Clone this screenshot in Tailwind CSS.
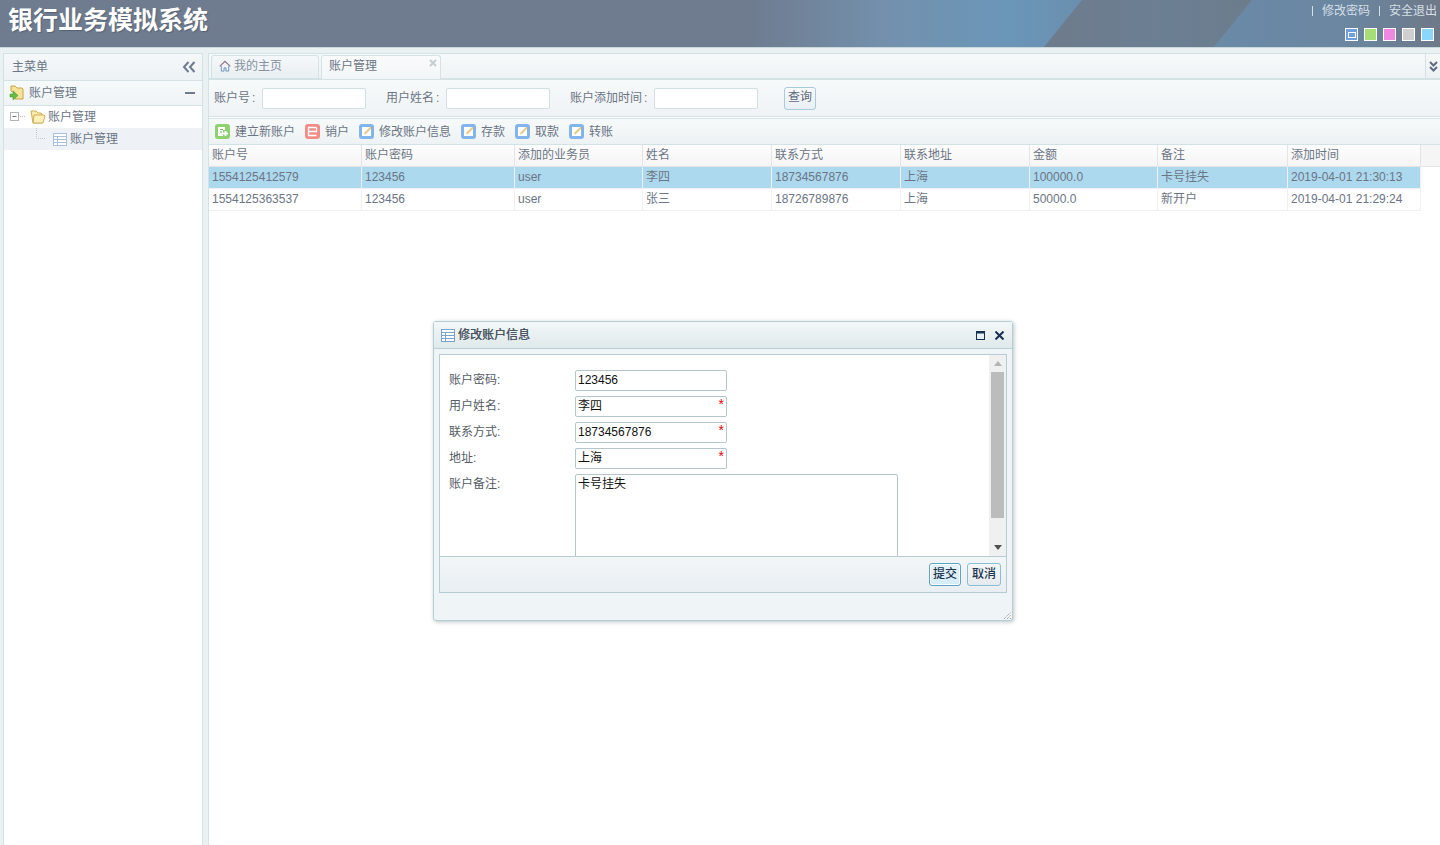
<!DOCTYPE html>
<html lang="zh">
<head>
<meta charset="utf-8">
<title>银行业务模拟系统</title>
<script src="https://cdn.jsdelivr.net/npm/@tailwindcss/browser@4"></script>
</head>
<body class="h-[845px] overflow-hidden bg-[#eaf1f2] font-['Liberation_Sans','Noto_Sans_CJK_SC',sans-serif] text-xs leading-[22px] text-[#6b7584]">
<div class="relative h-[845px] w-[1440px] overflow-hidden">

  <!-- header -->
  <header class="relative h-[48px] overflow-hidden border-b border-[#c9d8db] bg-[linear-gradient(90deg,#6f7c8f_0%,#6f7c8f_52%,#7391ae_62%,#6a96b8_70%,#6b8fae_75%,#6c8299_100%)]">
    <svg class="absolute inset-0" width="1440" height="47" viewBox="0 0 1440 47">
      <defs>
        <linearGradient id="d1" x1="0" x2="1" y1="0" y2="0"><stop offset="0" stop-color="#6e7b8c"/><stop offset=".6" stop-color="#6b7f93"/><stop offset="1" stop-color="#6c7c8c"/></linearGradient>
        <linearGradient id="d2" x1="0" x2="1" y1="0" y2="0"><stop offset="0" stop-color="#6a8aa8"/><stop offset=".6" stop-color="#6b86a0"/><stop offset="1" stop-color="#6e7888"/></linearGradient>
      </defs>
      <polygon points="1082,0 1252,0 1214,47 1044,47" fill="url(#d1)"/>
      <polygon points="1252,0 1440,0 1440,47 1214,47" fill="url(#d2)"/>
    </svg>
    <div class="relative flex h-full items-start justify-between">
      <div class="pl-2 pt-[7px] text-[25px] leading-[26px] font-bold text-white [text-shadow:1px_1px_1px_rgba(40,50,70,0.35)]">银行业务模拟系统</div>
      <div class="flex flex-col items-end pr-[3px]">
        <div class="flex h-[22px] items-center text-xs text-[#d5dfe6]">
          <span class="mr-[9px] h-[10px] w-px bg-[#d5dfe6]"></span><span>修改密码</span>
          <span class="mx-[9px] h-[10px] w-px bg-[#d5dfe6]"></span><span>安全退出</span>
        </div>
        <div class="mr-[3px] mt-[6px] flex gap-[6px]">
          <span class="flex h-[13px] w-[13px] items-center justify-center border border-white bg-[#6f9fe0]"><span class="h-[6px] w-[8px] border border-white"></span></span>
          <span class="h-[13px] w-[13px] border border-white bg-[#a7dd75]"></span>
          <span class="h-[13px] w-[13px] border border-white bg-[#ee88e0]"></span>
          <span class="h-[13px] w-[13px] border border-white bg-[#cfcfcf]"></span>
          <span class="h-[13px] w-[13px] border border-white bg-[#8cd6fb]"></span>
        </div>
      </div>
    </div>
  </header>

  <div class="flex h-[797px] pt-[5px]">
    <!-- sidebar -->
    <aside class="ml-[3px] h-[800px] w-[200px] shrink-0 border border-[#d3e2e4] bg-white">
      <div class="flex h-[27px] items-center justify-between border-b border-[#d3e2e4] bg-[linear-gradient(#f5f8f9,#edf2f5)] pl-[8px] pr-[6px]">
        <span>主菜单</span>
        <svg width="14" height="12" viewBox="0 0 14 12" fill="none" stroke="#6e7b8f" stroke-width="2"><path d="M6.500 1 2 6l4.500 5M12.500 1 8 6l4.500 5"/></svg>
      </div>
      <div class="flex h-[25px] items-center justify-between border-b border-[#d3e2e4] bg-[linear-gradient(#f7fafa,#eff3f6)] pl-[5px] pr-[7px]">
        <span class="flex items-center gap-[5px]">
          <svg width="15" height="16" viewBox="0 0 15 16"><path d="M2 1h4l2 2h5l1 1v10H6V8L2 6z" fill="#f5e39a" stroke="#c9a545"/><path d="M1 9h3V6l5 4.500L4 15v-3H1z" fill="#69bb45" stroke="#4d9a31" stroke-width=".6"/></svg>
          <span class="leading-[24px]">账户管理</span>
        </span>
        <span class="h-[2px] w-[10px] bg-[#6e7b8f]"></span>
      </div>
      <div class="flex h-[22px] items-center pl-[6px]">
        <svg width="21" height="10" viewBox="0 0 21 10" fill="none"><rect x=".5" y=".5" width="8" height="8" fill="#fff" stroke="#b4b4b4"/><path d="M2.500 4.500h4" stroke="#777"/><path d="M10 4.500h6" stroke="#c4c4c4" stroke-dasharray="1 1"/></svg>
        <svg class="ml-[-1px]" width="16" height="14" viewBox="0 0 16 14"><path d="M1 1h5l2 2h3l1 1v9H3z" fill="#fbeaa8" stroke="#cfae58"/><path d="M4 5h10l1 1-2 7H3z" fill="#fdf0bb" stroke="#cfae58"/></svg>
        <span class="ml-[2px]">账户管理</span>
      </div>
      <div class="flex h-[22px] items-center bg-[#eef2f7] pl-[32px]">
        <svg class="self-start" width="16" height="12" viewBox="0 0 16 12" fill="none"><path d="M.5 0v10.500h9" stroke="#c4c4c4" stroke-dasharray="1 1"/></svg>
        <svg class="ml-[1px]" width="14" height="13" viewBox="0 0 14 13" fill="#fff" stroke="#a9c0dd"><rect x=".5" y=".5" width="13" height="12"/><path d="M.5 3.500h13M.5 6.500h13M.5 9.500h13M4.500 3.500v9"/></svg>
        <span class="ml-[3px]">账户管理</span>
      </div>
    </aside>

    <!-- main -->
    <main class="ml-[5px] flex h-[800px] min-w-0 flex-1 flex-col border-l border-[#d3e2e4] bg-white">
      <!-- tabs -->
      <div class="relative flex h-[26px] border-b border-t border-[#d3e2e4] bg-[linear-gradient(#f7fafa,#eff3f5)] pl-[2px] pt-[1px]">
        <div class="flex h-[23px] w-[108px] items-start gap-[3px] rounded-t-[3px] border border-b-0 border-[#d3e2e4] bg-[linear-gradient(#f5f8f9,#e9eff2)] pl-[7px]">
          <svg class="mt-[4px]" width="12" height="12" viewBox="0 0 13 13" fill="none"><path d="M.8 7 6.500 1.500 12.200 7" stroke="#8d6f88" stroke-width="1.200"/><path d="M2.500 6.500V12h3V8.500h2V12h3V6.500" stroke="#6a8fc0"/></svg>
          <span class="leading-[21px] text-[#8590a0]">我的主页</span>
        </div>
        <div class="relative z-10 ml-[2px] flex h-[24px] w-[120px] items-start rounded-t-[3px] border border-b-0 border-[#d3e2e4] bg-[linear-gradient(#f9fbfb,#f3f6f8)] pl-[7px]">
          <span class="leading-[21px]">账户管理</span>
          <svg class="absolute right-[3px] top-[3px]" width="8" height="8" viewBox="0 0 8 8" stroke="#c3ced4" stroke-width="2"><path d="M1 1l6 6M7 1 1 7"/></svg>
        </div>
        <div class="absolute bottom-0 right-0 top-0 flex w-[15px] items-center justify-center border-l border-[#d3e2e4] bg-[linear-gradient(#f5f8f9,#edf1f4)]">
          <svg width="9" height="11" viewBox="0 0 9 11" fill="none" stroke="#5f6c80" stroke-width="2"><path d="M1 1l3.500 3.500L8 1M1 6l3.500 3.500L8 6"/></svg>
        </div>
      </div>
      <!-- search -->
      <div class="flex h-[38px] items-center border-b border-t border-[#d3e2e4] bg-[linear-gradient(#f7fafa,#eff3f6)] pl-[5px]">
        <span class="w-[48px]">账户号<span class="ml-[2px]">:</span></span>
        <span class="h-[21px] w-[104px] rounded-[2px] border border-[#cfdfe3] bg-white"></span>
        <span class="ml-[20px] w-[60px]">用户姓名<span class="ml-[2px]">:</span></span>
        <span class="h-[21px] w-[104px] rounded-[2px] border border-[#cfdfe3] bg-white"></span>
        <span class="ml-[20px] w-[84px]">账户添加时间<span class="ml-[2px]">:</span></span>
        <span class="h-[21px] w-[104px] rounded-[2px] border border-[#cfdfe3] bg-white"></span>
        <button class="ml-[26px] h-[23px] w-[32px] rounded-[3px] border border-[#a5cbdc] bg-[linear-gradient(#f8fafb,#e9eff3)] pb-[2px] text-xs leading-[18px] text-[#5e6a78]">查询</button>
      </div>
      <!-- toolbar -->
      <div class="mt-[1px] flex h-[27px] items-center gap-[10px] border-b border-t border-[#d3e2e4] bg-[linear-gradient(#f7fafa,#edf2f4)] pl-[6px]">
        <span class="flex items-center gap-[5px]">
          <svg width="15" height="15" viewBox="0 0 15 15"><rect width="15" height="15" rx="3" fill="#8fd071"/><path d="M3 3h7v3H8v6H3z" fill="#fff"/><path d="M8 9.500h5M10.500 7v5" stroke="#fff" stroke-width="1.800"/><path d="M5 5.500h3M5 8h2" stroke="#6fb650"/></svg>
          <span>建立新账户</span>
        </span>
        <span class="flex items-center gap-[5px]">
          <svg width="15" height="15" viewBox="0 0 15 15" fill="none"><rect width="15" height="15" rx="3" fill="#f28c86"/><path d="M11.500 3.500h-8v8h8M3.500 7.500h8v-4" stroke="#fff" stroke-width="1.300"/></svg>
          <span>销户</span>
        </span>
        <span class="flex items-center gap-[5px]">
          <svg width="15" height="15" viewBox="0 0 15 15"><rect width="15" height="15" rx="3" fill="#82b4ed"/><rect x="3" y="3" width="9" height="9" fill="#fff"/><path d="M5.500 10l.6-1.800L11.500 3l1 1-5.400 5.400z" fill="#f3cf82" stroke="#d6a24a" stroke-width=".4"/></svg>
          <span>修改账户信息</span>
        </span>
        <span class="flex items-center gap-[5px]">
          <svg width="15" height="15" viewBox="0 0 15 15"><rect width="15" height="15" rx="3" fill="#82b4ed"/><rect x="3" y="3" width="9" height="9" fill="#fff"/><path d="M5.500 10l.6-1.800L11.500 3l1 1-5.400 5.400z" fill="#f3cf82" stroke="#d6a24a" stroke-width=".4"/></svg>
          <span>存款</span>
        </span>
        <span class="flex items-center gap-[5px]">
          <svg width="15" height="15" viewBox="0 0 15 15"><rect width="15" height="15" rx="3" fill="#82b4ed"/><rect x="3" y="3" width="9" height="9" fill="#fff"/><path d="M5.500 10l.6-1.800L11.500 3l1 1-5.400 5.400z" fill="#f3cf82" stroke="#d6a24a" stroke-width=".4"/></svg>
          <span>取款</span>
        </span>
        <span class="flex items-center gap-[5px]">
          <svg width="15" height="15" viewBox="0 0 15 15"><rect width="15" height="15" rx="3" fill="#82b4ed"/><rect x="3" y="3" width="9" height="9" fill="#fff"/><path d="M5.500 10l.6-1.800L11.500 3l1 1-5.400 5.400z" fill="#f3cf82" stroke="#d6a24a" stroke-width=".4"/></svg>
          <span>转账</span>
        </span>
      </div>
      <!-- grid -->
      <div class="grid grid-cols-[153px_153px_128px_129px_129px_129px_128px_130px_133px_1fr] grid-rows-[22px_22px_22px]">
        <div class="border-b border-r border-[#e4e4e4] bg-[linear-gradient(#fdfdfd,#f5f5f5)] pl-[3px] leading-[21px]">账户号</div>
        <div class="border-b border-r border-[#e4e4e4] bg-[linear-gradient(#fdfdfd,#f5f5f5)] pl-[3px] leading-[21px]">账户密码</div>
        <div class="border-b border-r border-[#e4e4e4] bg-[linear-gradient(#fdfdfd,#f5f5f5)] pl-[3px] leading-[21px]">添加的业务员</div>
        <div class="border-b border-r border-[#e4e4e4] bg-[linear-gradient(#fdfdfd,#f5f5f5)] pl-[3px] leading-[21px]">姓名</div>
        <div class="border-b border-r border-[#e4e4e4] bg-[linear-gradient(#fdfdfd,#f5f5f5)] pl-[3px] leading-[21px]">联系方式</div>
        <div class="border-b border-r border-[#e4e4e4] bg-[linear-gradient(#fdfdfd,#f5f5f5)] pl-[3px] leading-[21px]">联系地址</div>
        <div class="border-b border-r border-[#e4e4e4] bg-[linear-gradient(#fdfdfd,#f5f5f5)] pl-[3px] leading-[21px]">金额</div>
        <div class="border-b border-r border-[#e4e4e4] bg-[linear-gradient(#fdfdfd,#f5f5f5)] pl-[3px] leading-[21px]">备注</div>
        <div class="border-b border-r border-[#e4e4e4] bg-[linear-gradient(#fdfdfd,#f5f5f5)] pl-[3px] leading-[21px]">添加时间</div>
        <div class="border-b border-[#e4e4e4] bg-[#f5f5f5]"></div>

        <div class="border-b border-r border-[#f0f0f0] bg-[#add9ef] pl-[3px] leading-[21px]">1554125412579</div>
        <div class="border-b border-r border-[#f0f0f0] bg-[#add9ef] pl-[3px] leading-[21px]">123456</div>
        <div class="border-b border-r border-[#f0f0f0] bg-[#add9ef] pl-[3px] leading-[21px]">user</div>
        <div class="border-b border-r border-[#f0f0f0] bg-[#add9ef] pl-[3px] leading-[21px]">李四</div>
        <div class="border-b border-r border-[#f0f0f0] bg-[#add9ef] pl-[3px] leading-[21px]">18734567876</div>
        <div class="border-b border-r border-[#f0f0f0] bg-[#add9ef] pl-[3px] leading-[21px]">上海</div>
        <div class="border-b border-r border-[#f0f0f0] bg-[#add9ef] pl-[3px] leading-[21px]">100000.0</div>
        <div class="border-b border-r border-[#f0f0f0] bg-[#add9ef] pl-[3px] leading-[21px]">卡号挂失</div>
        <div class="border-b border-r border-[#f0f0f0] bg-[#add9ef] pl-[3px] leading-[21px]">2019-04-01 21:30:13</div>
        <div></div>

        <div class="border-b border-r border-[#f0f0f0] pl-[3px] leading-[21px]">1554125363537</div>
        <div class="border-b border-r border-[#f0f0f0] pl-[3px] leading-[21px]">123456</div>
        <div class="border-b border-r border-[#f0f0f0] pl-[3px] leading-[21px]">user</div>
        <div class="border-b border-r border-[#f0f0f0] pl-[3px] leading-[21px]">张三</div>
        <div class="border-b border-r border-[#f0f0f0] pl-[3px] leading-[21px]">18726789876</div>
        <div class="border-b border-r border-[#f0f0f0] pl-[3px] leading-[21px]">上海</div>
        <div class="border-b border-r border-[#f0f0f0] pl-[3px] leading-[21px]">50000.0</div>
        <div class="border-b border-r border-[#f0f0f0] pl-[3px] leading-[21px]">新开户</div>
        <div class="border-b border-r border-[#f0f0f0] pl-[3px] leading-[21px]">2019-04-01 21:29:24</div>
        <div></div>
      </div>
    </main>
  </div>

  <!-- dialog -->
  <div class="absolute left-[433px] top-[321px] flex h-[300px] w-[580px] flex-col rounded-[3px] border border-[#b5ced5] bg-[#eff4f6] shadow-[1px_1px_4px_rgba(100,120,130,0.45)]">
    <div class="flex h-[27px] shrink-0 items-center justify-between border-b border-[#b9ced5] bg-[linear-gradient(#f3f7f8,#dfe9eb)] pl-[7px] pr-[8px]">
      <span class="flex items-center gap-[3px] text-[#4c5563]">
        <svg width="14" height="13" viewBox="0 0 14 13" fill="#fff" stroke="#7ba2cd"><rect x=".5" y=".5" width="13" height="12"/><path d="M.5 3.500h13M.5 6.500h13M.5 9.500h13M4.500 3.500v9"/></svg>
        <span class="[text-shadow:0.3px_0_0_#4c5563]">修改账户信息</span>
      </span>
      <span class="flex items-center gap-[10px]">
        <svg width="9" height="9" viewBox="0 0 9 9" fill="none" stroke="#17304f"><rect x=".5" y=".5" width="8" height="8"/><path d="M0 1.500h9" stroke-width="2"/></svg>
        <svg width="9" height="9" viewBox="0 0 9 9" stroke="#17304f" stroke-width="2"><path d="M.5.5l8 8M8.500.5l-8 8"/></svg>
      </span>
    </div>
    <div class="mx-[5px] mt-[5px] flex h-[239px] shrink-0 flex-col border border-[#b5ccd5] bg-white">
      <div class="relative flex h-[201px] shrink-0 overflow-hidden">
        <div class="flex-1 overflow-hidden pl-[9px] pt-[15px] text-[#555c66]">
          <div class="flex h-[21px] items-center"><span class="w-[126px] pb-[2px] leading-[20px]">账户密码:</span><span class="h-[21px] w-[152px] rounded-[2px] border border-[#b4c6cc] pl-[2px] leading-[18px] text-[#111]">123456</span></div>
          <div class="mt-[5px] flex h-[21px] items-center"><span class="w-[126px] pb-[2px] leading-[20px]">用户姓名:</span><span class="relative h-[21px] w-[152px] rounded-[2px] border border-[#b4c6cc] pl-[2px] leading-[18px] text-[#111]">李四<span class="absolute right-[2px] top-[0px] text-[14px] leading-[14px] text-red-600">*</span></span></div>
          <div class="mt-[5px] flex h-[21px] items-center"><span class="w-[126px] pb-[2px] leading-[20px]">联系方式:</span><span class="relative h-[21px] w-[152px] rounded-[2px] border border-[#b4c6cc] pl-[2px] leading-[18px] text-[#111]">18734567876<span class="absolute right-[2px] top-[0px] text-[14px] leading-[14px] text-red-600">*</span></span></div>
          <div class="mt-[5px] flex h-[21px] items-center"><span class="w-[126px] pb-[2px] leading-[20px]">地址:</span><span class="relative h-[21px] w-[152px] rounded-[2px] border border-[#b4c6cc] pl-[2px] leading-[18px] text-[#111]">上海<span class="absolute right-[2px] top-[0px] text-[14px] leading-[14px] text-red-600">*</span></span></div>
          <div class="mt-[5px] flex items-start"><span class="w-[126px] pt-[1px] leading-[18px]">账户备注:</span><span class="h-[120px] w-[323px] rounded-[2px] border border-[#b4c6cc] pl-[2px] leading-[18px] text-[#111]">卡号挂失</span></div>
        </div>
        <div class="flex w-[17px] shrink-0 flex-col items-center bg-[#f0f0f0]">
          <svg class="mt-[6px]" width="8" height="5" viewBox="0 0 8 5"><path d="M4 0l4 5H0z" fill="#b4b4b4"/></svg>
          <div class="mt-[6px] h-[146px] w-[13px] bg-[#bcbcbc]"></div>
          <svg class="mt-[27px]" width="8" height="5" viewBox="0 0 8 5"><path d="M0 0h8L4 5z" fill="#505050"/></svg>
        </div>
      </div>
      <div class="flex flex-1 items-center justify-end gap-[6px] border-t border-[#b5ccd5] bg-[linear-gradient(#f3f6f7,#e8eef3)] pr-[5px]">
        <button class="h-[23px] w-[32px] rounded-[3px] border border-[#5da3c4] bg-[linear-gradient(#e5f3fa,#d4edf8)] pb-[2px] text-xs font-medium leading-[18px] text-[#1f3550] shadow-[inset_0_0_0_1px_#fff]">提交</button>
        <button class="h-[23px] w-[34px] rounded-[3px] border border-[#8cbdd4] bg-[linear-gradient(#f4f7f8,#e4ebee)] pb-[2px] text-xs font-medium leading-[18px] text-[#1f3550]">取消</button>
      </div>
    </div>
    <svg class="absolute bottom-[1px] right-[1px]" width="7" height="7" viewBox="0 0 7 7" stroke="#7d8c94" stroke-dasharray="1 1"><path d="M0 7l7-7M3 7l4-4M6 7l1-1"/></svg>
  </div>
</div>
</body>
</html>
